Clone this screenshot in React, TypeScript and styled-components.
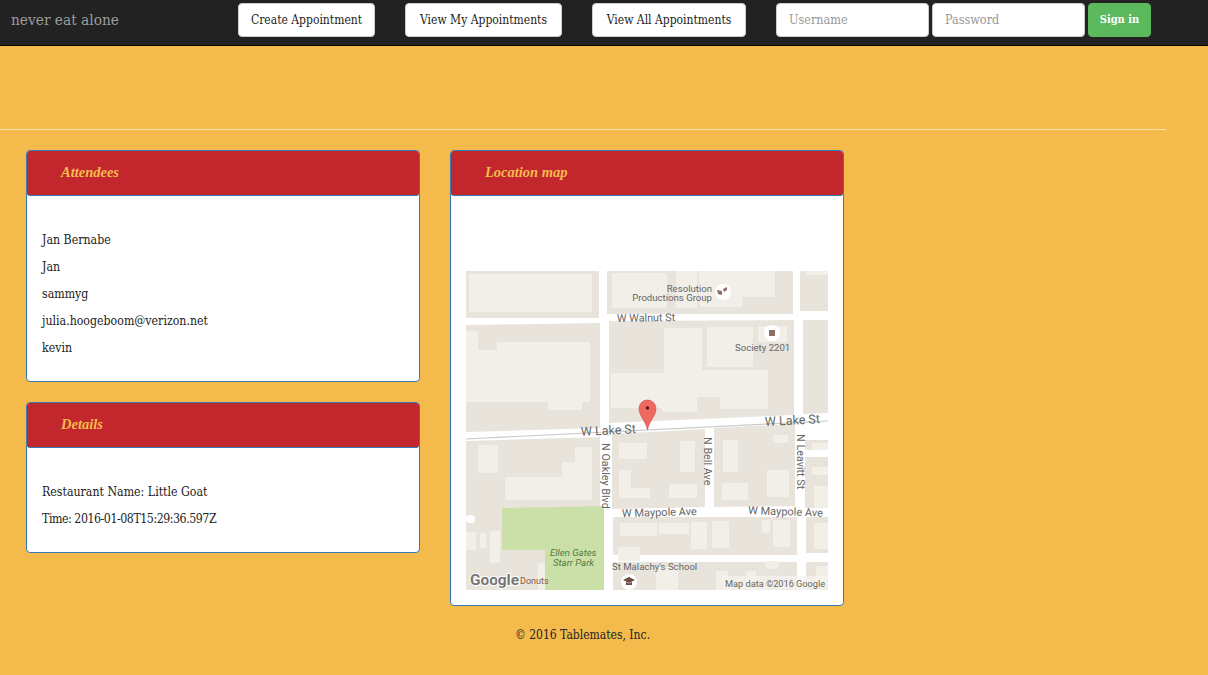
import React from "react";
import styled, { createGlobalStyle } from "styled-components";

const Global = createGlobalStyle`
  html, body { margin: 0; padding: 0; background: #f4bb4c; }
  body { font-family: "DejaVu Serif Condensed", "DejaVu Serif", "Liberation Serif", serif; font-size: 12.25px; color: #222222; }
  * { box-sizing: border-box; }
`;

const Navbar = styled.nav`
  height: 46px;
  background: #222222;
  border-bottom: 1px solid #080808;
  display: flex;
  align-items: flex-start;
  padding-top: 3px;
  gap: 30px;
`;
const Brand = styled.a`
  width: 208px;
  padding: 7px 0 0 11px;
  font-size: 15.3px;
  line-height: 20px;
  color: #9d9d9d;
`;
const NavButton = styled.button<{ $w: number }>`
  width: ${(p) => p.$w}px;
  height: 34px;
  border: 1px solid #cccccc;
  border-radius: 4px;
  background: #ffffff;
  color: #222222;
  font: inherit;
  font-size: 12px;
  padding: 0 0 1px;
`;
const SignForm = styled.form`
  display: flex;
  gap: 3px;
`;
const Field = styled.input`
  width: 153px;
  height: 34px;
  border: 1px solid #cccccc;
  border-radius: 4px;
  background: #ffffff;
  padding: 0 12px 2px;
  font: inherit;
  font-size: 12.5px;
  &::placeholder { color: #999999; opacity: 1; }
`;
const SignIn = styled.button`
  width: 63px;
  height: 34px;
  border: 1px solid #5cb85c;
  border-radius: 4px;
  background: #5cb85c;
  color: #ffffff;
  font: inherit;
  font-size: 11px;
  font-weight: 700;
  padding: 0 0 1px;
`;
const Rule = styled.hr`
  width: 1166px;
  height: 1px;
  margin: 83px 0 20px;
  border: 0;
  background: #fce6ae;
`;
const Columns = styled.main`
  display: flex;
  align-items: flex-start;
  gap: 30px;
  padding-left: 26px;
`;
const Column = styled.div`
  width: 394px;
  display: flex;
  flex-direction: column;
  gap: 20px;
`;
const Panel = styled.section`
  background: #ffffff;
  border: 1px solid #337ab7;
  border-radius: 4px;
`;
const Heading = styled.header`
  height: 45px;
  background: #c1272d;
  border-bottom: 1px solid #337ab7;
  border-radius: 3px;
  padding: 0 0 2px 34px;
  display: flex;
  align-items: center;
`;
const Title = styled.h3`
  margin: 0;
  font-family: "Liberation Serif", serif;
  font-style: italic;
  font-weight: 700;
  font-size: 14.5px;
  color: #f4bb4c;
`;
const TextBody = styled.div`
  padding: 36px 15px 14px;
`;
const Line = styled.p<{ $tight?: boolean }>`
  margin: 0 0 10px;
  line-height: 17px;
  letter-spacing: ${(p) => (p.$tight ? "-0.45px" : "0")};
`;
const MapBody = styled.div`
  padding: 75px 15px 15px;
`;
const MapSvg = styled.svg`
  display: block;
  width: 362px;
  height: 319px;
`;
const Footer = styled.footer`
  padding: 21px 0 0 515px;
  font-size: 12px;
  line-height: 17px;
`;

const B = "#e8e4dc";
const F = "#f2efe9";
const blocks = [
  [0, 0, 133, 47], [141, 0, 186, 43], [334, 0, 28, 40],
  [339, 169, 23, 10], [339, 186, 23, 51], [340, 246, 23, 36],
  [147, 246, 184, 38], [147, 291, 184, 28], [340, 291, 22, 28],
];
const buildings = [
  [3, 3, 123, 38], [146, 2, 55, 35], [210, 0, 21, 37], [233, 0, 76, 26], [234, 7, 42, 29], [340, 0, 22, 4],
  [0, 79, 124, 52], [31, 71, 93, 8], [82, 131, 34, 8], [0, 60, 12, 19],
  [198, 57, 38, 45], [241, 56, 46, 40], [292, 55, 29, 16], [145, 102, 51, 35], [196, 102, 35, 39], [231, 99, 23, 27], [254, 99, 48, 39],
  [12, 174, 20, 28], [39, 206, 72, 23], [96, 191, 13, 15], [109, 176, 17, 53],
  [0, 261, 10, 18], [14, 262, 6, 15], [24, 260, 10, 32], [72, 292, 7, 27],
  [153, 172, 28, 16], [214, 170, 15, 31], [153, 199, 12, 28], [165, 217, 19, 10], [203, 213, 28, 14],
  [257, 169, 15, 32], [256, 212, 26, 17], [301, 199, 22, 27], [307, 164, 15, 8], [346, 172, 16, 7], [346, 196, 16, 8], [348, 215, 14, 22],
  [154, 252, 37, 13], [193, 252, 30, 11], [225, 251, 16, 27], [246, 250, 17, 27], [296, 249, 8, 13], [307, 249, 17, 27], [348, 252, 14, 26],
  [152, 276, 22, 14], [300, 290, 12, 8], [250, 300, 12, 19], [280, 300, 10, 19], [350, 295, 12, 20], [190, 296, 22, 23],
];

const MapDrawing = () => (
  <MapSvg viewBox="0 0 362 319" role="img">
    <defs>
      <filter id="soft"><feGaussianBlur stdDeviation="0.35" /></filter>
    </defs>
    <rect width="362" height="319" fill="#ffffff" />
    <g filter="url(#soft)">
      {blocks.map(([x, y, w, h], i) => <rect key={i} x={x} y={y} width={w} height={h} fill={B} />)}
      <polygon points="0,54 134,52 134,157 0,161" fill={B} />
      <polygon points="143,50 328,49 328,144 143,152" fill={B} />
      <polygon points="337,49 362,49 362,142 337,143" fill={B} />
      <polygon points="0,170 134,166 134,319 0,319" fill={B} />
      <polygon points="146,163 239,158 239,236 146,238" fill={B} />
      <polygon points="248,157 329,153 329,235 248,236" fill={B} />
      <polygon points="36,237 138,235 138,319 79,319 79,279 36,279" fill="#cbdfa9" />
      {buildings.map(([x, y, w, h], i) => <rect key={i} x={x} y={y} width={w} height={h} fill={F} />)}
      <rect x="0" y="244" width="9" height="8" rx="4" fill="#ffffff" />
      <line x1="0" y1="168" x2="362" y2="150" stroke="#c9c9c9" strokeWidth="1.2" />
      <rect x="258" y="305" width="104" height="14" fill="#f5f3ee" opacity="0.75" />
    </g>
    <g fontFamily="Roboto, 'Liberation Sans', sans-serif" fontSize="10.8" fill="#666666">
      <text x="246" y="21" textAnchor="end" fontSize="9.6">Resolution</text>
      <text x="246" y="30" textAnchor="end" fontSize="9.6">Productions Group</text>
      <text x="151" y="51" transform="rotate(-1 151 51)">W Walnut St</text>
      <text x="269" y="80" fontSize="9.6">Society 2201</text>
      <text x="115" y="165" transform="rotate(-3 115 165)" fontSize="12.5">W Lake St</text>
      <text x="299" y="155" transform="rotate(-3 299 155)" fontSize="12.5">W Lake St</text>
      <text x="136" y="172" transform="rotate(90 136 172)">N Oakley Blvd</text>
      <text x="238" y="166" transform="rotate(90 238 166)">N Bell Ave</text>
      <text x="331" y="163" transform="rotate(90 331 163)">N Leavitt St</text>
      <text x="156" y="246" transform="rotate(-1.5 156 246)" fontSize="11">W Maypole Ave</text>
      <text x="282" y="243" transform="rotate(2 282 243)" fontSize="11">W Maypole Ave</text>
      <text x="146" y="299" fontSize="9.6">St Malachy's School</text>
      <text x="259" y="316" fontSize="9.2">Map data ©2016 Google</text>
      <text x="84" y="285" fontSize="9.6" fontStyle="italic" fill="#4f7a3a">Ellen Gates</text>
      <text x="87" y="294.500" fontSize="9.6" fontStyle="italic" fill="#4f7a3a">Starr Park</text>
      <text x="54" y="313" fontSize="9" fill="#8a5a44">Donuts</text>
      <text x="4" y="314" fontSize="15.5" fontWeight="700" fill="#777777" stroke="#ffffff" strokeWidth="2" paintOrder="stroke" textLength="49">Google</text>
    </g>
    <circle cx="257" cy="21" r="8" fill="#ffffff" />
    <path d="M251 19l5 1v4l-4-1zM257 18l4-2v3l-3 2z" fill="#8d6e63" />
    <circle cx="306" cy="62" r="8" fill="#ffffff" />
    <rect x="303" y="59" width="6" height="6" fill="#8d6e63" />
    <circle cx="163" cy="311" r="8" fill="#ffffff" />
    <path d="M157 309l6-3 6 3-6 3zM160 311v3h6v-3l-3 1.5z" fill="#6d4c41" />
    <path d="M181.500 159 C180 150 173 145 173 137.500 A8.500 8.500 0 0 1 190 137.500 C190 145 183 150 181.500 159 Z" fill="#ee6a60" stroke="#d1453d" strokeWidth="0.6" />
    <circle cx="181.500" cy="137" r="1.7" fill="#5a1410" />
  </MapSvg>
);

export default function App() {
  return (
    <>
      <Global />
      <Navbar>
        <Brand>never eat alone</Brand>
        <NavButton $w={137}>Create Appointment</NavButton>
        <NavButton $w={157}>View My Appointments</NavButton>
        <NavButton $w={154}>View All Appointments</NavButton>
        <SignForm>
          <Field placeholder="Username" />
          <Field placeholder="Password" />
          <SignIn type="button">Sign in</SignIn>
        </SignForm>
      </Navbar>
      <Rule />
      <Columns>
        <Column>
          <Panel>
            <Heading><Title>Attendees</Title></Heading>
            <TextBody>
              <Line>Jan Bernabe</Line>
              <Line>Jan</Line>
              <Line>sammyg</Line>
              <Line>julia.hoogeboom@verizon.net</Line>
              <Line>kevin</Line>
            </TextBody>
          </Panel>
          <Panel>
            <Heading><Title>Details</Title></Heading>
            <TextBody>
              <Line>Restaurant Name: Little Goat</Line>
              <Line $tight>Time: 2016-01-08T15:29:36.597Z</Line>
            </TextBody>
          </Panel>
        </Column>
        <Column>
          <Panel>
            <Heading><Title>Location map</Title></Heading>
            <MapBody><MapDrawing /></MapBody>
          </Panel>
        </Column>
      </Columns>
      <Footer>© 2016 Tablemates, Inc.</Footer>
    </>
  );
}
